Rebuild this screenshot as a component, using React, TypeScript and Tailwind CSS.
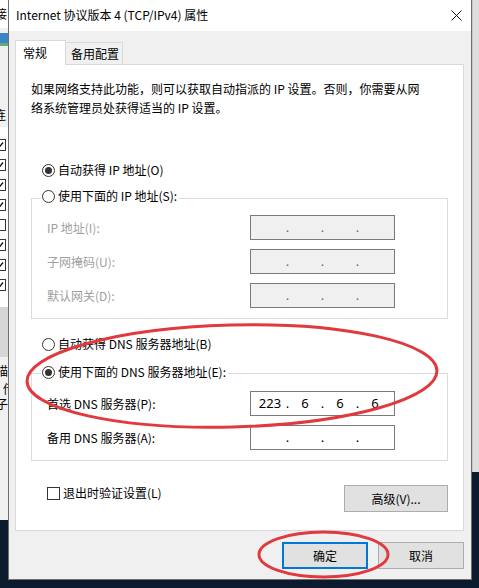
import React, { Fragment } from "react";

const font = "font-['Noto_Sans_CJK_SC','Noto_Sans',sans-serif]";

function Radio({ checked }: { checked?: boolean }) {
  return (
    <span className="w-[13px] h-[13px] rounded-full border border-[#333333] bg-white flex items-center justify-center shrink-0">
      {checked && <span className="w-[7px] h-[7px] rounded-full bg-[#333333]" />}
    </span>
  );
}

function IpInput({ values, disabled }: { values?: string[]; disabled?: boolean }) {
  const v = values ?? ["", "", "", ""];
  return (
    <div
      className={`w-[145px] h-[25px] border border-[#7a7a7a] flex items-center pl-[4px] text-[13px] font-['Noto_Sans',sans-serif] ${
        disabled ? "bg-[#f0f0f0] text-[#6d6d6d]" : "bg-white text-black"
      }`}
    >
      {v.map((x, i) => (
        <Fragment key={i}>
          <span className="w-[30px] text-center leading-[23px]">{x}</span>
          {i < 3 && <span className="w-[5px] text-center leading-[23px]">.</span>}
        </Fragment>
      ))}
    </div>
  );
}

function FieldRow({ label, disabled, values }: { label: string; disabled?: boolean; values?: string[] }) {
  return (
    <div className="flex items-center h-[25px]">
      <span className={`w-[218px] pl-[15px] text-[12px] leading-[16px] ${disabled ? "text-[#a0a0a0]" : "text-black"}`}>
        {label}
      </span>
      <IpInput disabled={disabled} values={values} />
    </div>
  );
}

function Check() {
  return (
    <svg width="8" height="8" viewBox="0 0 8 8">
      <path d="M1 4.5 L3 6.5 L7 1.5" stroke="#111" strokeWidth="1.4" fill="none" />
    </svg>
  );
}

function LeftStrip() {
  const boxes = [true, true, true, true, false, true, true, true];
  return (
    <div className={`absolute left-0 top-0 w-[8px] h-[520px] bg-[#f0f0f0] overflow-hidden flex flex-col text-[12px] text-black ${font}`}>
      <div className="h-[28px] bg-white flex items-center">
        <span className="-ml-[5px] leading-[16px]">接</span>
      </div>
      <div className="h-[5px]" />
      <div className="h-[13px] bg-[#3d86c6] border-b-[3px] border-[#5fae6e]" />
      <div className="h-[57px]" />
      <div className="h-[24px] flex items-center">
        <span className="-ml-[6px] leading-[16px]">连</span>
      </div>
      <div className="h-[8px] bg-white" />
      <div className="bg-white flex flex-col">
        {boxes.map((c, i) => (
          <div key={i} className="h-[20px] flex items-center">
            <span className="-ml-[6px] w-[12px] h-[12px] border border-[#333] bg-white flex items-center justify-end pr-[1px]">
              {c && <Check />}
            </span>
          </div>
        ))}
      </div>
      <div className="h-[12px] bg-white" />
      <div className="h-[50px] bg-[#d6d6d6]" />
      <div className="h-[22px] flex items-end">
        <span className="-ml-[4px] leading-[16px]">描</span>
      </div>
      <div className="h-[18px] flex items-end">
        <span className="ml-[3px] leading-[16px]">传</span>
      </div>
      <div className="h-[14px] flex items-end">
        <span className="-ml-[4px] leading-[14px]">子</span>
      </div>
    </div>
  );
}

export default function App() {
  return (
    <div className={`relative w-[479px] h-[588px] overflow-hidden bg-[#0c1a2e] ${font}`}>
      <LeftStrip />
      <div className="absolute left-[472px] top-0 w-[7px] h-[472px] bg-[#dedede] border-l border-[#c8c8c8]" />

      {/* main dialog window */}
      <div className="absolute left-[8px] top-0 w-[464px] h-[580px] border border-t-0 border-[#6f6f6f] bg-[#f0f0f0] flex flex-col text-black">
        {/* title bar */}
        <div className="h-[31px] bg-white flex items-center justify-between pl-[7px] pr-[9px] shrink-0">
          <span className="text-[12px] leading-[16px] -mt-[1px]">Internet 协议版本 4 (TCP/IPv4) 属性</span>
          <svg width="11" height="11" viewBox="0 0 11 11" className="-mt-[1px]">
            <path d="M0.5 0.5 L10.5 10.5 M10.5 0.5 L0.5 10.5" stroke="#111" strokeWidth="1" />
          </svg>
        </div>

        {/* tabs */}
        <div className="mt-[9px] ml-[6px] h-[24px] flex items-end shrink-0">
          <div className="relative z-10 w-[51px] h-[25px] -mb-[1px] bg-white border border-b-0 border-[#d9d9d9] flex items-center pl-[7px]">
            <span className="text-[12px] leading-[16px]">常规</span>
          </div>
          <div className="w-[57px] h-[22px] bg-[#f0f0f0] border border-l-0 border-b-0 border-[#d9d9d9] flex items-center pl-[5px]">
            <span className="text-[12px] leading-[16px] mt-[1px]">备用配置</span>
          </div>
        </div>

        {/* panel */}
        <div className="ml-[6px] w-[449px] h-[467px] bg-white border border-[#d9d9d9] flex flex-col shrink-0 text-[12px]">
          <p className="mt-[14px] pl-[15px] leading-[19px]">
            如果网络支持此功能，则可以获取自动指派的 IP 设置。否则，你需要从网
            <br />
            络系统管理员处获得适当的 IP 设置。
          </p>

          <div className="mt-[45px] ml-[26px] h-[16px] flex items-center gap-[3px]">
            <Radio checked />
            <span className="leading-[16px]">自动获得 IP 地址(O)</span>
          </div>

          <div className="mt-[20px] ml-[15px] w-[417px] border border-[#dcdcdc] flex flex-col pb-[10px]">
            <div className="-mt-[11px] h-[16px] flex">
              <div className="ml-[9px] pl-[1px] pr-[2px] bg-white flex items-center gap-[3px]">
                <Radio />
                <span className="leading-[16px]">使用下面的 IP 地址(S):</span>
              </div>
            </div>
            <div className="mt-[11px] flex flex-col gap-[9px]">
              <FieldRow label="IP 地址(I):" disabled />
              <FieldRow label="子网掩码(U):" disabled />
              <FieldRow label="默认网关(D):" disabled />
            </div>
          </div>

          <div className="mt-[17px] ml-[26px] h-[16px] flex items-center gap-[3px]">
            <Radio />
            <span className="leading-[16px]">自动获得 DNS 服务器地址(B)</span>
          </div>

          <div className="mt-[21px] ml-[15px] w-[417px] border border-[#dcdcdc] flex flex-col pb-[10px]">
            <div className="-mt-[10px] h-[16px] flex">
              <div className="ml-[9px] pl-[1px] pr-[2px] bg-white flex items-center gap-[3px]">
                <Radio checked />
                <span className="leading-[16px]">使用下面的 DNS 服务器地址(E):</span>
              </div>
            </div>
            <div className="mt-[11px] flex flex-col gap-[9px]">
              <FieldRow label="首选 DNS 服务器(P):" values={["223", "6", "6", "6"]} />
              <FieldRow label="备用 DNS 服务器(A):" />
            </div>
          </div>

          <div className="mt-[24px] ml-[15px] w-[417px] flex items-start justify-between">
            <div className="mt-[1px] pl-[16px] h-[14px] flex items-center gap-[3px]">
              <span className="w-[13px] h-[13px] border border-[#333] bg-white shrink-0" />
              <span className="leading-[16px]">退出时验证设置(L)</span>
            </div>
            <button className="w-[104px] h-[27px] bg-[#e1e1e1] border border-[#adadad] text-[12px] leading-[16px]">
              高级(V)...
            </button>
          </div>
        </div>

        {/* bottom buttons */}
        <div className="mt-[11px] pr-[7px] flex justify-end gap-[10px] shrink-0">
          <button className="w-[86px] h-[27px] bg-[#e1e1e1] border-2 border-[#0078d7] text-[12px] leading-[16px]">
            确定
          </button>
          <button className="w-[86px] h-[27px] bg-[#e1e1e1] border border-[#adadad] text-[12px] leading-[16px]">
            取消
          </button>
        </div>
      </div>

      {/* red annotation ellipses */}
      <svg className="absolute left-0 top-0 pointer-events-none" width="479" height="588" viewBox="0 0 479 588">
        <ellipse cx="232" cy="376" rx="205" ry="51" fill="none" stroke="#e0393e" strokeWidth="3" transform="rotate(-1.5 232 376)" />
        <ellipse cx="323.5" cy="554.5" rx="64.5" ry="22.5" fill="none" stroke="#e0393e" strokeWidth="3" />
      </svg>
    </div>
  );
}
